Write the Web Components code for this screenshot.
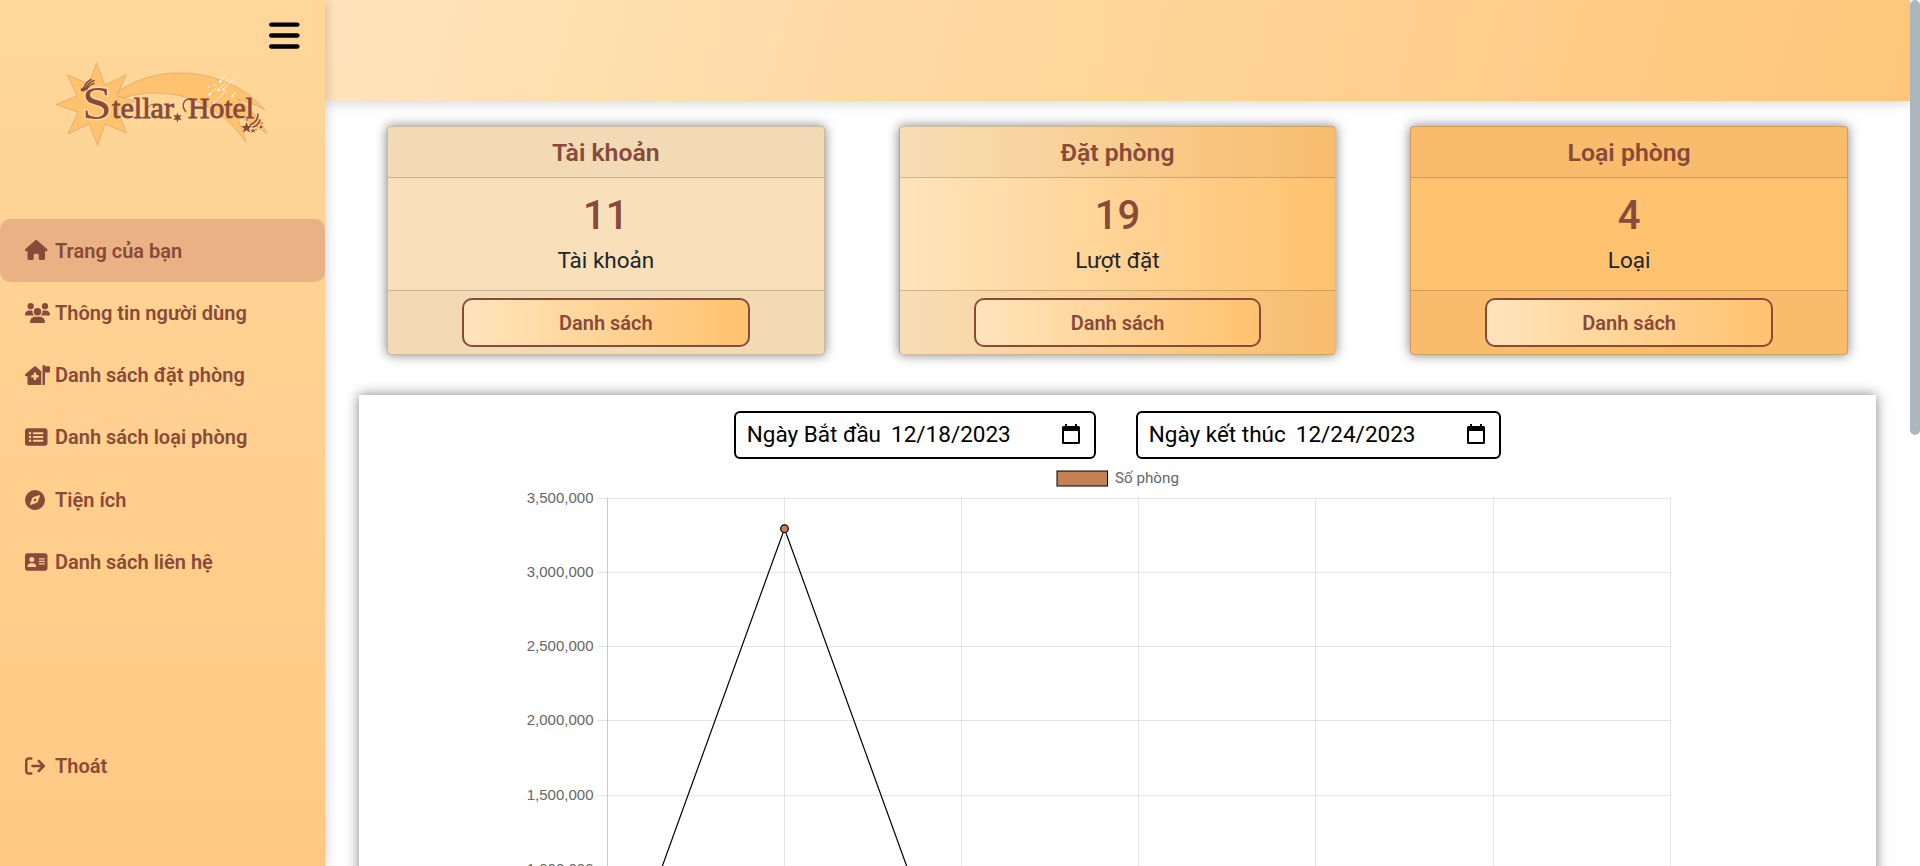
<!DOCTYPE html>
<html lang="vi">
<head>
<meta charset="utf-8">
<title>Stellar Hotel</title>
<style>
  html, body { margin: 0; height: 100%; overflow: hidden; }
  body { font-family: Roboto, "Noto Sans", sans-serif; color: #212529; background: #fff; line-height: 1.5; }
</style>
</head>
<body>
<hotel-dashboard></hotel-dashboard>
<script>
const ICONS = {
  house: [576, 'M575.8 255.5c0 18-15 32.1-32 32.1h-32l.7 160.2c0 2.7-.2 5.4-.5 8.1V472c0 22.1-17.9 40-40 40H456c-1.1 0-2.2 0-3.3-.1c-1.4 .1-2.8 .1-4.2 .1H416 392c-22.1 0-40-17.9-40-40V448 384c0-17.7-14.3-32-32-32H256c-17.7 0-32 14.3-32 32v64 24c0 22.1-17.9 40-40 40H160 128.1c-1.5 0-3-.1-4.5-.2c-1.2 .1-2.4 .2-3.6 .2H104c-22.1 0-40-17.9-40-40V360c0-.9 0-1.9 .1-2.8V287.6H32c-18 0-32-14-32-32.1c0-9 3-17 10-24L266.4 8c7-7 15-8 22-8s15 2 21 7L564.8 231.5c8 7 12 15 11 24z'],
  users: [640, 'M144 0a80 80 0 1 1 0 160A80 80 0 1 1 144 0zM512 0a80 80 0 1 1 0 160A80 80 0 1 1 512 0zM0 298.7C0 239.8 47.8 192 106.7 192h42.7c15.9 0 31 3.5 44.6 9.7c-1.3 7.2-1.9 14.7-1.9 22.3c0 38.2 16.8 72.5 43.3 96H21.3C9.6 320 0 310.4 0 298.7zM405.3 320c26.6-23.5 43.3-57.8 43.3-96c0-7.6-.7-15-1.9-22.3c13.6-6.3 28.7-9.7 44.6-9.7h42.7C592.2 192 640 239.8 640 298.7c0 11.8-9.6 21.3-21.3 21.3H405.3zM224 224a96 96 0 1 1 192 0 96 96 0 1 1 -192 0zM128 485.3C128 411.7 187.7 352 261.3 352H378.7C452.3 352 512 411.7 512 485.3c0 14.7-11.9 26.7-26.7 26.7H154.7c-14.7 0-26.7-11.9-26.7-26.7z'],
  clinic: [640, 'M480 0c17.7 0 32 14.3 32 32H624c8.8 0 16 7.2 16 16V176c0 8.8-7.2 16-16 16H512V512H448V32c0-17.7 14.3-32 32-32zM416 159V512H96c-17.7 0-32-14.3-32-32V288H32c-13.4 0-25.4-8.4-30-21s-1.2-26.8 9-35.5l224-192c12-10.3 29.7-10.3 41.7 0L416 159zM224 208v48h-48c-8.800 0-16 7.200-16 16v32c0 8.800 7.200 16 16 16h48v48c0 8.800 7.200 16 16 16h32c8.800 0 16-7.200 16-16v-48h48c8.800 0 16-7.200 16-16v-32c0-8.800-7.200-16-16-16h-48v-48c0-8.800-7.200-16-16-16h-32c-8.800 0-16 7.200-16 16z'],
  list: [576, 'M0 96C0 60.7 28.7 32 64 32H512c35.3 0 64 28.7 64 64V416c0 35.3-28.7 64-64 64H64c-35.3 0-64-28.7-64-64V96zM128 288a32 32 0 1 0 0-64 32 32 0 1 0 0 64zm32-128a32 32 0 1 0 -64 0 32 32 0 1 0 64 0zM128 384a32 32 0 1 0 0-64 32 32 0 1 0 0 64zm96-248c-13.3 0-24 10.7-24 24s10.7 24 24 24H448c13.3 0 24-10.7 24-24s-10.7-24-24-24H224zm0 96c-13.3 0-24 10.7-24 24s10.7 24 24 24H448c13.3 0 24-10.7 24-24s-10.7-24-24-24H224zm0 96c-13.3 0-24 10.7-24 24s10.7 24 24 24H448c13.3 0 24-10.7 24-24s-10.7-24-24-24H224z'],
  compass: [512, 'M256 512A256 256 0 1 0 256 0a256 256 0 1 0 0 512zm50.7-186.9L162.4 380.6c-19.4 7.5-38.5-11.6-31-31l55.5-144.3c3.3-8.5 9.9-15.1 18.4-18.4l144.3-55.5c19.4-7.5 38.5 11.6 31 31L325.1 306.7c-3.2 8.5-9.9 15.1-18.4 18.4zM288 256a32 32 0 1 0 -64 0 32 32 0 1 0 64 0z'],
  card: [576, 'M64 32C28.7 32 0 60.7 0 96V416c0 35.3 28.7 64 64 64H512c35.3 0 64-28.7 64-64V96c0-35.3-28.7-64-64-64H64zm80 256h64c44.2 0 80 35.8 80 80c0 8.8-7.2 16-16 16H80c-8.8 0-16-7.2-16-16c0-44.2 35.8-80 80-80zm-32-96a64 64 0 1 1 128 0 64 64 0 1 1 -128 0zm256-32H496c8.8 0 16 7.2 16 16s-7.2 16-16 16H368c-8.8 0-16-7.2-16-16s7.2-16 16-16zm0 64H496c8.8 0 16 7.2 16 16s-7.2 16-16 16H368c-8.8 0-16-7.2-16-16s7.2-16 16-16zm0 64H496c8.8 0 16 7.2 16 16s-7.2 16-16 16H368c-8.8 0-16-7.2-16-16s7.2-16 16-16z'],
  exit: [512, 'M502.6 278.6c12.5-12.5 12.5-32.8 0-45.3l-128-128c-12.5-12.5-32.8-12.5-45.3 0s-12.5 32.8 0 45.3L402.7 224 192 224c-17.7 0-32 14.3-32 32s14.3 32 32 32l210.7 0-73.4 73.4c-12.5 12.5-12.5 32.8 0 45.3s32.8 12.5 45.3 0l128-128zM160 96c17.7 0 32-14.3 32-32s-14.3-32-32-32L96 32C43 32 0 75 0 128L0 384c0 53 43 96 96 96l64 0c17.7 0 32-14.3 32-32s-14.3-32-32-32l-64 0c-17.7 0-32-14.3-32-32l0-256c0-17.7 14.3-32 32-32l64 0z'],
  bars: [448, 'M0 96C0 78.3 14.3 64 32 64H416c17.7 0 32 14.3 32 32s-14.3 32-32 32H32C14.3 128 0 113.7 0 96zM0 256c0-17.7 14.3-32 32-32H416c17.7 0 32 14.3 32 32s-14.3 32-32 32H32c-17.7 0-32-14.3-32-32zM448 416c0 17.7-14.3 32-32 32H32c-17.7 0-32-14.3-32-32s14.3-32 32-32H416c17.7 0 32 14.3 32 32z'],
};

const define = (name, render) => customElements.define(name, class extends HTMLElement {
  connectedCallback() {
    if (this.shadowRoot) return;
    this.attachShadow({ mode: 'open' }).innerHTML = render(this);
  }
});

define('fa-icon', el => {
  const [w, d] = ICONS[el.getAttribute('name')];
  return `<style>
    :host { display: block; height: 1em; line-height: 0; }
    svg { display: block; height: 1em; width: ${w / 512}em; fill: currentColor; }
  </style><svg viewBox="0 0 ${w} 512"><path d="${d}"/></svg>`;
});

define('hotel-logo', () => `<style>
    :host { display: block; width: 215px; height: 88px; }
    svg { display: block; }
    .name { font-family: "Liberation Serif", serif; fill: #884a39; stroke: #884a39; }
    .initial { paint-order: stroke; stroke: #ffd89e; stroke-width: 3; }
  </style>
  <svg width="215" height="88" viewBox="54 60 215 88">
    <g fill="#ffc26f" stroke="#d9a468" stroke-width=".7" stroke-linejoin="round">
      <path d="M117 92C140 77 160 73 181 73C213 73 246 87 265 110C257 105 247 101 237 99C250 108 261 120 267 134C258 127 248 120 236 115C239 122 243 131 246 142C232 122 212 105 185 97C165 92 145 91 122 98Z"/>
      <path d="M96.500 63L105 85L126 75L117 96L135 101L117 110L126.500 133L105 124L97.500 145.500L89 124L68 134L78 112L56 104.500L77 96L67.500 75L89 84Z"/>
    </g>
    <g class="name" stroke-width=".8">
      <text class="initial" x="82" y="118.500" font-size="47" textLength="30" lengthAdjust="spacingAndGlyphs">S</text>
      <text x="112" y="118" font-size="30" textLength="62" lengthAdjust="spacingAndGlyphs">tellar</text>
      <text x="188" y="118" font-size="30" textLength="66" lengthAdjust="spacingAndGlyphs">Hotel</text>
    </g>
    <path d="M192 99c-9-1-11 7-6 13" fill="none" stroke="#884a39" stroke-width="1.300"/>
    <g fill="#884a39">
      <path d="M177.500 112.500l1.100 3 3.100-.5-2 2.500 2 2.500-3.100-.5-1.100 3-1.100-3-3.100.5 2-2.500-2-2.500 3.100.5z"/>
      <path d="M246.500 122l1.500 4h4l-3 2.500 1 4-3.500-2.200-3.500 2.200 1-4-3-2.500h4z"/>
      <path d="M253 128.500l.7 1.500h1.700l-1.200 1.200.5 1.600-1.700-1-1.700 1 .5-1.600-1.200-1.200h1.700z"/>
      <path d="M80.500 89l2-1 2-1.500 1.300 3-2 2-2.500-.3z"/>
      <circle cx="261" cy="127" r="1.300"/><circle cx="262" cy="123" r=".8"/><circle cx="256" cy="129.500" r=".8"/><circle cx="247" cy="120" r=".8"/>
    </g>
    <g fill="none" stroke="#884a39" stroke-linecap="round">
      <path d="M84 88C85 84 88 81 91 79.500M85.500 88.500C87 85 90 82 94 80.500M86 90C88 87 91 84 94 83.500" stroke-width="1.500"/>
      <path d="M250 125c5-2 8-6 8-11M253 127c4-1 6-4 7-7" stroke-width="1.500"/>
      <path d="M147 109c2-5 7-6 12-4" stroke-width=".7"/>
    </g>
    <g stroke="#fff" stroke-width=".7" stroke-linecap="round">
      <path d="M220 81l6-6M219 89l10-10M223 89l10-9M210 94l6-6M214 103l12-12M232 96l4-4M234 82l1-1"/>
    </g>
    <g fill="#fff"><circle cx="220.500" cy="81.500" r="1.300"/><circle cx="218.500" cy="90" r="1.500"/><circle cx="223.500" cy="89.500" r="1.200"/><circle cx="209.500" cy="94.500" r="1.200"/><circle cx="232.500" cy="96" r="1.200"/><circle cx="214.500" cy="85" r=".8"/><circle cx="208.500" cy="87" r=".8"/><circle cx="214" cy="102.500" r=".9"/><circle cx="225.500" cy="98.500" r=".7"/><circle cx="216.500" cy="77" r=".6"/></g>
  </svg>`);

define('nav-item', el => `<style>
    :host { display: flex; align-items: center; height: 62.400px; padding-left: 25px; border-radius: 10px; color: #884a39; font-size: 20px; font-weight: 600; line-height: 30px; white-space: nowrap; }
    :host([active]) { background: #eab284; height: 63px; margin-bottom: -.6px; box-sizing: border-box; padding-top: 1px; }
    fa-icon { width: 30px; flex: none; }
    :host([active]) fa-icon { margin-top: -2px; }
  </style><fa-icon name="${el.getAttribute('icon')}"></fa-icon><slot></slot>`);

define('side-bar', () => `<style>
    :host { display: flex; flex-direction: column; width: 325px; height: 866px; background: linear-gradient(#ffd79b, #ffc983); box-shadow: 0 0 12px rgba(0,0,0,.22); z-index: 2; position: relative; }
    .toggle { display: flex; justify-content: flex-end; padding: 18px 25px 0 0; font-size: 35px; color: #000; height: 42px; }
    hotel-logo { margin: 0 0 71px 54px; flex: none; }
    nav { display: flex; flex-direction: column; flex: none; }
    nav + nav { margin-top: 141.500px; }
  </style>
  <div class="toggle"><fa-icon name="bars"></fa-icon></div>
  <hotel-logo></hotel-logo>
  <nav>
    <nav-item icon="house" active>Trang của bạn</nav-item>
    <nav-item icon="users">Thông tin người dùng</nav-item>
    <nav-item icon="clinic">Danh sách đặt phòng</nav-item>
    <nav-item icon="list">Danh sách loại phòng</nav-item>
    <nav-item icon="compass">Tiện ích</nav-item>
    <nav-item icon="card">Danh sách liên hệ</nav-item>
  </nav>
  <nav><nav-item icon="exit">Thoát</nav-item></nav>`);

define('stat-card', () => `<style>
    :host { display: flex; flex-direction: column; box-sizing: border-box; height: 229px; border: 1px solid rgba(0,0,0,.175); border-radius: 4px; background: var(--fill); box-shadow: 0 0 12px rgba(0,0,0,.5); text-align: center; overflow: hidden; }
    header, footer { background: rgba(33,37,41,.03); box-sizing: border-box; }
    header { height: 51px; border-bottom: 1px solid rgba(0,0,0,.175); font-size: 24.800px; font-weight: 600; line-height: 52px; color: #884a39; }
    main { flex: 1; }
    .value { font-size: 40px; font-weight: 500; line-height: 48px; color: #884a39; padding-top: 14px; }
    .unit { font-size: 22.500px; line-height: 34px; padding-top: 3px; }
    footer { height: 64px; border-top: 1px solid rgba(0,0,0,.175); padding-top: 7px; }
    button { display: block; margin: 0 auto; box-sizing: border-box; width: 287.500px; height: 49px; border: 2px solid #884a39; border-radius: 10px; background: linear-gradient(to right, #ffe4bb, #ffc26f); color: #884a39; font: 600 20px Roboto, sans-serif; padding: 0; }
  </style>
  <header><slot name="title"></slot></header>
  <main><div class="value"><slot name="value"></slot></div><div class="unit"><slot></slot></div></main>
  <footer><button>Danh sách</button></footer>`);

define('date-field', () => `<style>
    :host { display: flex; align-items: center; box-sizing: border-box; height: 48px; border: 2px solid #000; border-radius: 6px; padding: 0 14px 1.500px 10.500px; font-size: 22.500px; color: #000; white-space: nowrap; line-height: 42px; }
    .date { margin-left: 10px; flex: 1; }
    svg { display: block; }
  </style>
  <slot></slot><span class="date"><slot name="date"></slot></span>
  <svg width="18" height="20" viewBox="0 0 18 20"><path fill-rule="evenodd" d="M3 0h2v2h8V0h2v2h1.500Q18 2 18 3.500v15q0 1.500-1.500 1.500h-15Q0 20 0 18.500v-15Q0 2 1.500 2H3zM2 7v11h14V7z"/></svg>`);

define('line-chart', () => {
  const ox = 248.5, oy = 103.5, sx = 177.1, sy = 74.15;
  const ticks = ['3,500,000', '3,000,000', '2,500,000', '2,000,000', '1,500,000', '1,000,000'];
  const rows = ticks.map((t, i) => {
    const y = Math.round(oy + i * sy - .5) + .5;
    return `<line x1="238" x2="1311.500" y1="${y}" y2="${y}"/><text x="234.500" y="${oy + i * sy + 4.4}" text-anchor="end">${t}</text>`;
  }).join('');
  const cols = [0, 1, 2, 3, 4, 5, 6].map(i => {
    const x = Math.round(ox + i * sx - .5) + .5;
    return `<line x1="${x}" x2="${x}" y1="103" y2="480" ${i ? '' : 'stroke-opacity=".2"'}/>`;
  }).join('');
  return `<style>
    :host { display: block; overflow: hidden; }
    svg { display: block; }
    text { font-family: "Liberation Sans", Arial, sans-serif; font-size: 15px; fill: #666; stroke: none; }
    .legend { font-family: Roboto, sans-serif; font-size: 15.200px; }
  </style>
  <svg width="1517" height="471" viewBox="0 0 1517 471">
    <g stroke="#000" stroke-opacity=".1">${rows}${cols}</g>
    <rect x="698" y="76" width="50.500" height="15" fill="#c38154" stroke="#000"/>
    <text class="legend" x="756" y="88">Số phòng</text>
    <path d="M248.500 622.500L425.500 133.700L602.500 622.500" fill="none" stroke="#000" stroke-width="1.200"/>
    <circle cx="425.500" cy="133.700" r="3.800" fill="#c38154" stroke="#000" stroke-width="1.200"/>
  </svg>`;
});

define('chart-panel', () => `<style>
    :host { display: grid; background: #fff; box-shadow: 0 0 12px rgba(0,0,0,.5); height: 700px; }
    .dates, line-chart { grid-area: 1 / 1; }
    .dates { display: flex; justify-content: center; align-items: flex-start; gap: 40.500px; padding-top: 16px; }
    .from { width: 361.500px; } .to { width: 364.500px; }
  </style>
  <line-chart></line-chart>
  <div class="dates">
    <date-field class="from">Ngày Bắt đầu<span slot="date">12/18/2023</span></date-field>
    <date-field class="to">Ngày kết thúc<span slot="date">12/24/2023</span></date-field>
  </div>`);

define('scroll-bar', () => `<style>
    :host { display: block; background: #fff; }
    div { height: 435px; background: #adb5bd; border-radius: 5px; }
  </style><div></div>`);

define('hotel-dashboard', () => `<style>
    :host { display: grid; grid-template-columns: 325px 1fr 10px; height: 866px; overflow: hidden; }
    .page { display: flex; flex-direction: column; min-width: 0; overflow: hidden; }
    .top { height: 101px; flex: none; background: linear-gradient(105deg, #ffe4bb, #ffc679); box-shadow: 0 0 14px rgba(0,0,0,.22); }
    .cards { display: grid; grid-template-columns: repeat(3, 1fr); gap: 74px; padding: 25px 62px 40px; flex: none; }
    chart-panel { margin: 0 34px; flex: none; }
  </style>
  <side-bar></side-bar>
  <div class="page">
    <div class="top"></div>
    <div class="cards">
      <stat-card style="--fill:#f9e0bb"><span slot="title">Tài khoản</span><span slot="value">11</span>Tài khoản</stat-card>
      <stat-card style="--fill:linear-gradient(to right,#ffe4bb,#ffc26f)"><span slot="title">Đặt phòng</span><span slot="value">19</span>Lượt đặt</stat-card>
      <stat-card style="--fill:#ffc26f"><span slot="title">Loại phòng</span><span slot="value">4</span>Loại</stat-card>
    </div>
    <chart-panel></chart-panel>
  </div>
  <scroll-bar></scroll-bar>`);
</script>
</body>
</html>
